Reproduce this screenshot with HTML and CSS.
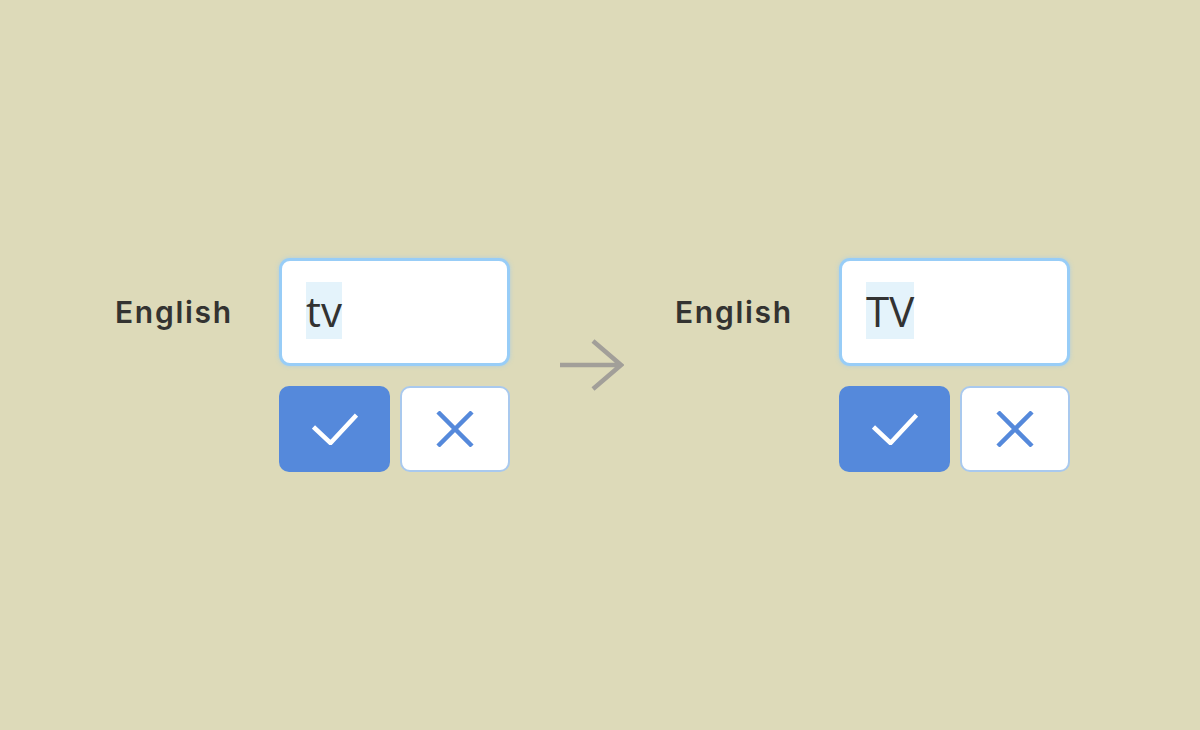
FILE: index.html
```html
<!DOCTYPE html>
<html>
<head>
<meta charset="utf-8">
<link rel="stylesheet" href="styles.css">
</head>
<body>
<main class="stage">
  <section class="field">
    <div class="label">English</div>
    <div class="editor">
      <div class="input"><span class="sel">tv</span></div>
      <div class="actions">
        <button class="btn confirm"><svg width="46" height="32" viewBox="0 0 46 32"><path d="M1.5 14 L18.5 30 L44.5 2" fill="none" stroke="#fff" stroke-width="4.5"/></svg></button>
        <button class="btn cancel"><svg width="38" height="36" viewBox="0 0 38 36"><path d="M2 1 L36 35 M36 1 L2 35" fill="none" stroke="#5589db" stroke-width="4.5"/></svg></button>
      </div>
    </div>
  </section>
  <div class="arrow"><svg width="64" height="52" viewBox="0 0 64 52"><path d="M0 26 H62 M33 2 L61 26 L33 50" fill="none" stroke="#a29f99" stroke-width="4.5"/></svg></div>
  <section class="field">
    <div class="label">English</div>
    <div class="editor">
      <div class="input"><span class="sel">TV</span></div>
      <div class="actions">
        <button class="btn confirm"><svg width="46" height="32" viewBox="0 0 46 32"><path d="M1.5 14 L18.5 30 L44.5 2" fill="none" stroke="#fff" stroke-width="4.5"/></svg></button>
        <button class="btn cancel"><svg width="38" height="36" viewBox="0 0 38 36"><path d="M2 1 L36 35 M36 1 L2 35" fill="none" stroke="#5589db" stroke-width="4.5"/></svg></button>
      </div>
    </div>
  </section>
</main>
</body>
</html>
```
FILE: styles.css
```css
html, body {
  margin: 0;
  padding: 0;
  height: 100%;
}
body {
  background: #dddab9;
  font-family: Inter, "Open Sans", sans-serif;
}
.stage {
  height: 730px;
  display: flex;
  align-items: center;
  padding-left: 115px;
  box-sizing: border-box;
}
.field {
  display: flex;
  align-items: flex-start;
}
.label {
  width: 164px;
  height: 108px;
  display: flex;
  align-items: center;
  font-size: 30px;
  font-weight: 600;
  letter-spacing: 1.7px;
  color: #333331;
  padding-top: 0;
  box-sizing: border-box;
}
.editor {
  display: flex;
  flex-direction: column;
  gap: 20px;
  width: 231px;
}
.input {
  height: 108px;
  box-sizing: border-box;
  background: #fff;
  border: 3px solid #98cdf7;
  border-radius: 11px;
  box-shadow: 0 0 4px rgba(160, 205, 240, 0.7);
  padding: 21px 0 0 24px;
  font-family: "Open Sans", sans-serif;
  font-size: 42px;
  color: #323232;
}
.sel {
  background: #e4f3fb;
  display: inline-block;
  line-height: 57px;
}
.actions {
  display: flex;
  gap: 10px;
}
.btn {
  width: 111px;
  height: 86px;
  border-radius: 10px;
  box-sizing: border-box;
  display: flex;
  align-items: center;
  justify-content: center;
  padding: 0;
}
.confirm {
  background: #5589db;
  border: none;
}
.cancel {
  background: #fff;
  border: 2px solid #a9c9ee;
  width: 110px;
}
.arrow {
  width: 64px;
  margin: 0 51px 0 50px;
  display: flex;
  align-items: center;
}
.arrow svg {
  display: block;
}
```
